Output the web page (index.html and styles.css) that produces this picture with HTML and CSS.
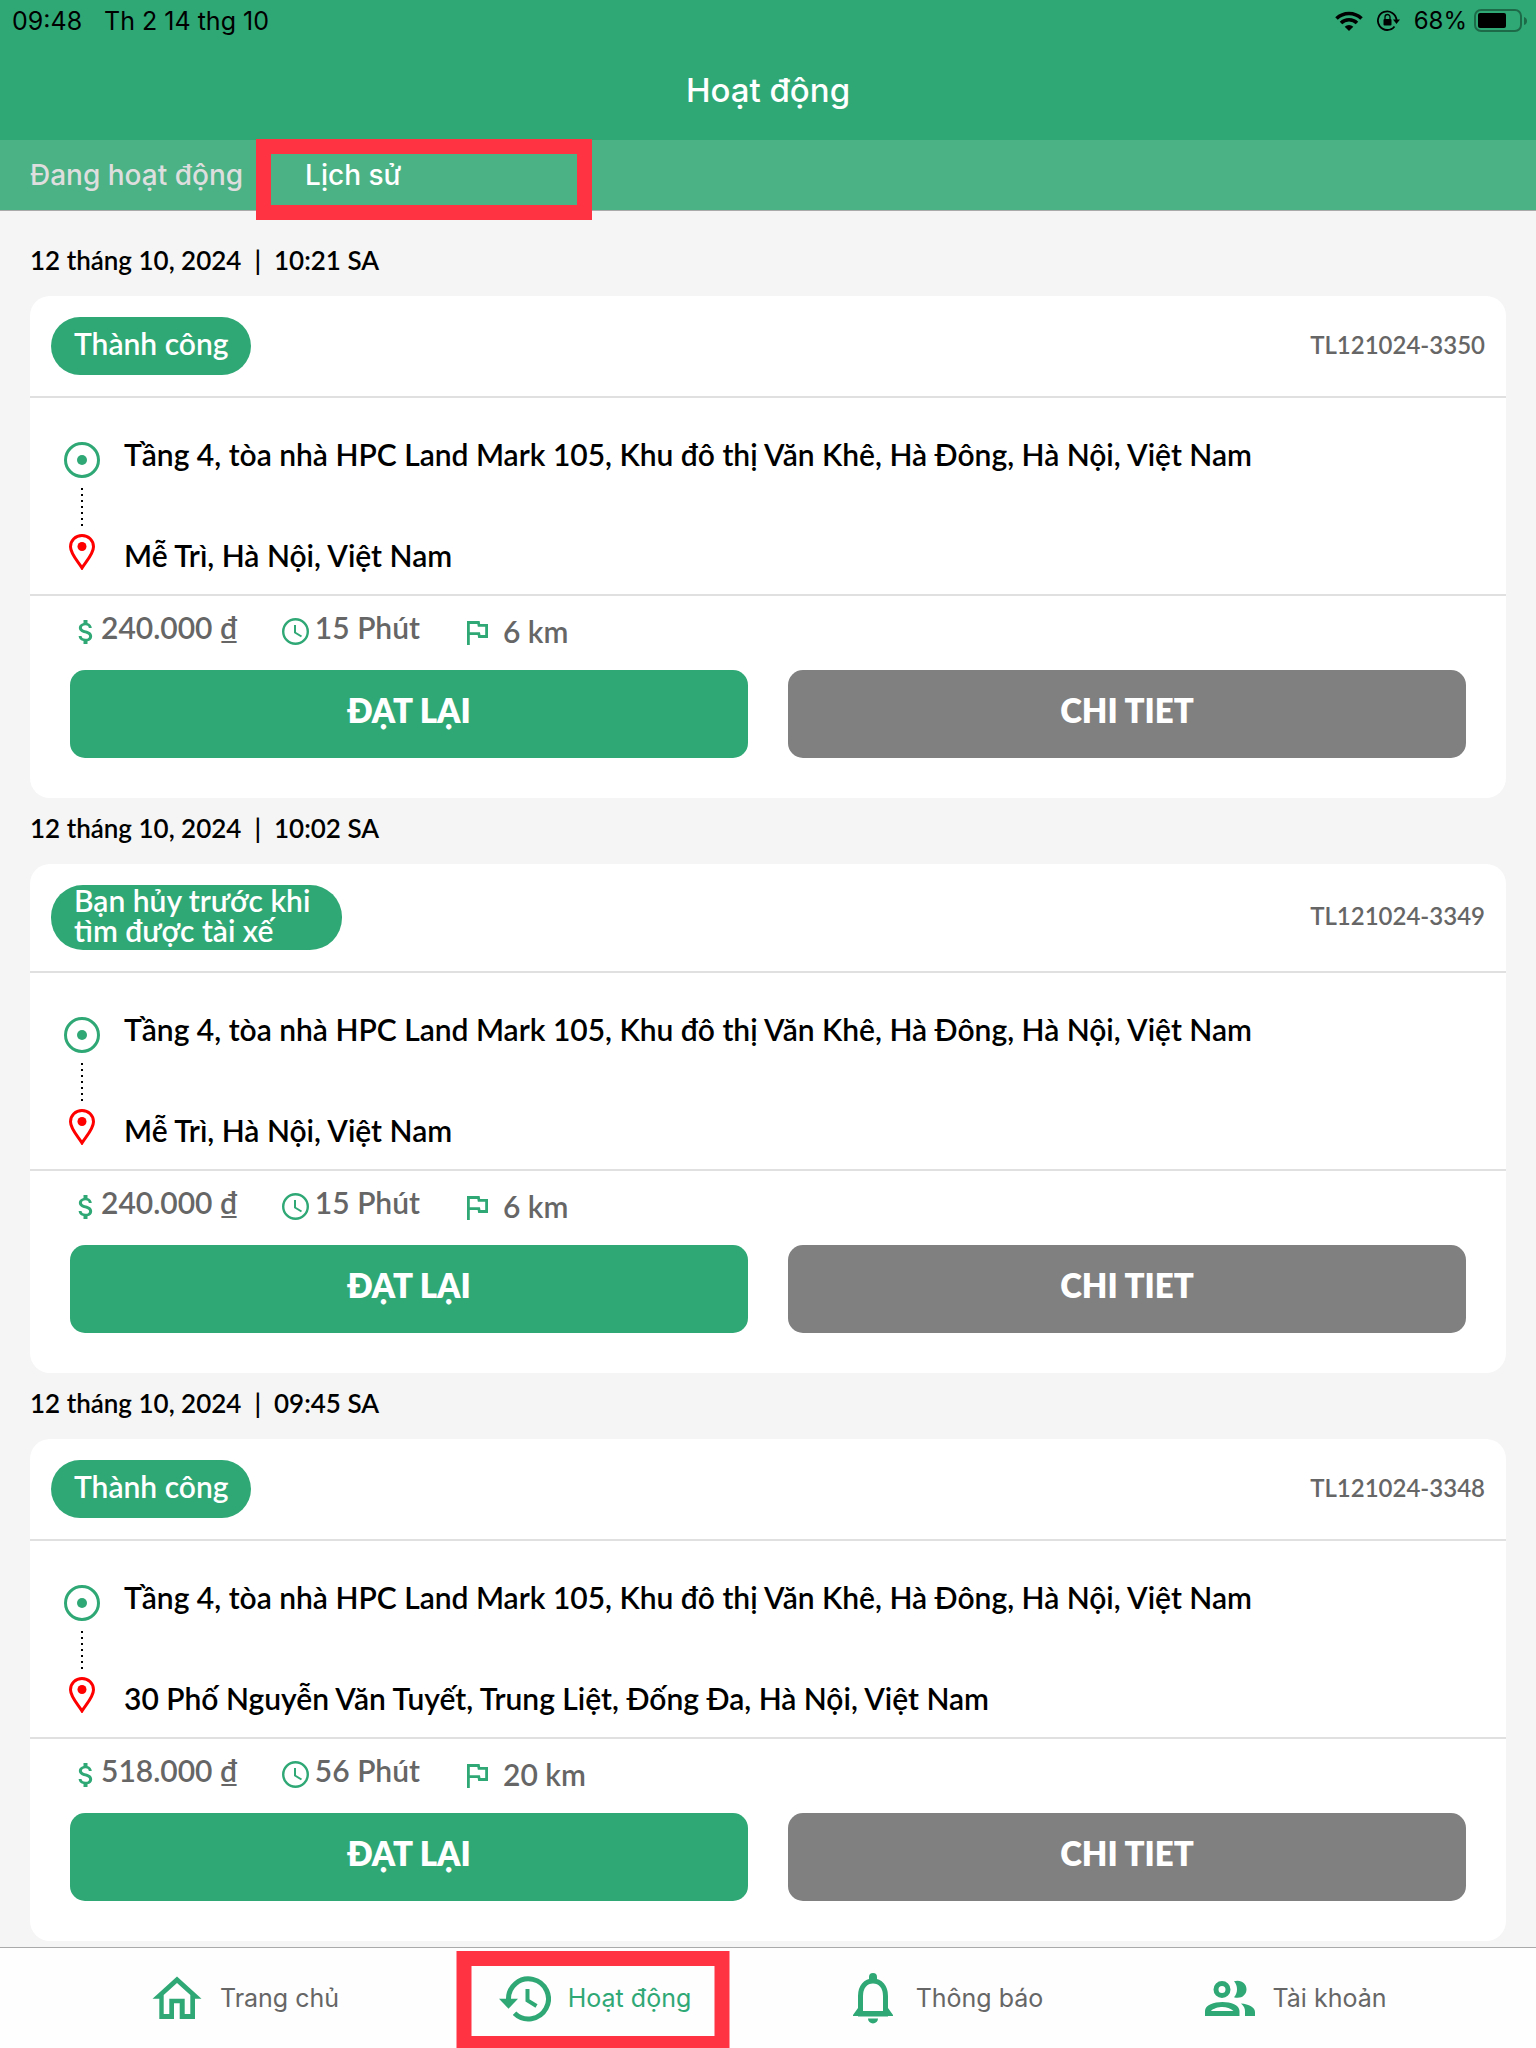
FILE: index.html
```
<!DOCTYPE html>
<html lang="vi">
<head>
    <meta charset="UTF-8">
    <meta name="viewport" content="width=device-width, initial-scale=1.0">
    <title>Hoạt động</title>
    <link rel="stylesheet" href="styles.css">
</head>
<body>
    <!-- Shared icons -->
    <svg class="sprite" aria-hidden="true">
        <symbol id="icon-start" viewBox="0 0 36 36">
            <circle cx="18" cy="18" r="16.5" fill="none" stroke="currentColor" stroke-width="3"/>
            <circle cx="18" cy="18" r="5" fill="currentColor"/>
        </symbol>
        <symbol id="icon-pin" viewBox="0 0 26 36">
            <path d="M13 1.5C6.500 1.500 1.500 6.300 1.500 12.800 1.500 20 9 27.500 13 34 17 27.500 24.500 20 24.500 12.800 24.500 6.300 19.500 1.500 13 1.500z" fill="none" stroke="currentColor" stroke-width="3"/>
            <circle cx="13" cy="12.500" r="4.500" fill="currentColor"/>
        </symbol>
        <symbol id="icon-money" viewBox="6 3 11 18">
            <path fill="currentColor" d="M11.800 10.900c-2.270-.59-3-1.200-3-2.150 0-1.090 1.010-1.850 2.700-1.850 1.780 0 2.440.85 2.500 2.100h2.210c-.07-1.720-1.120-3.300-3.210-3.810V3h-3v2.160c-1.940.42-3.500 1.680-3.500 3.610 0 2.310 1.910 3.460 4.700 4.130 2.500.6 3 1.480 3 2.410 0 .69-.49 1.790-2.700 1.790-2.060 0-2.870-.92-2.980-2.100h-2.200c.12 2.190 1.760 3.420 3.680 3.830V21h3v-2.150c1.950-.37 3.500-1.500 3.500-3.550 0-2.840-2.430-3.810-4.700-4.400z"/>
        </symbol>
        <symbol id="icon-clock" viewBox="0 0 27 27">
            <circle cx="13.500" cy="13.500" r="12.300" fill="none" stroke="currentColor" stroke-width="2.400"/>
            <path d="M13 7v7.500l6.500 4" fill="none" stroke="currentColor" stroke-width="2"/>
        </symbol>
        <symbol id="icon-flag" viewBox="5 4 15 17">
            <path fill="currentColor" d="M12.360 6l.4 2H18v6h-3.360l-.4-2H7V6h5.360M14 4H5v17h2v-7h5.600l.4 2h7V6h-5.600L14 4z"/>
        </symbol>
    </svg>

    <header class="header">
        <div class="status-bar">
            <div class="status-left">
                <span>09:48</span>
                <span>Th 2 14 thg 10</span>
            </div>
            <div class="status-right">
                <svg class="wifi" viewBox="0 0 28 20" aria-hidden="true">
                    <path d="M1.500 7.500a18 18 0 0 1 25 0M6 12a11.500 11.500 0 0 1 16 0" fill="none" stroke="#000" stroke-width="3.600"/>
                    <path d="M14 20l-4.300-4.300a6 6 0 0 1 8.600 0z"/>
                </svg>
                <svg class="lock" viewBox="0 0 23 21" aria-hidden="true">
                    <path d="M17.500 16.500a9.300 9.300 0 1 1 2-6.500" fill="none" stroke="#000" stroke-width="1.800"/>
                    <path d="M16 9.500h7l-3.500 4.500z"/>
                    <rect x="6.500" y="9" width="8" height="6.500" rx="1"/>
                    <path d="M8 9.500V7a2.500 2.500 0 0 1 5 0v2.500" fill="none" stroke="#000" stroke-width="1.300"/>
                </svg>
                <span>68%</span>
                <svg class="battery" viewBox="0 0 53 23" aria-hidden="true">
                    <rect x="1" y="1" width="46" height="21" rx="6" fill="none" stroke="#1d6a48" stroke-width="2"/>
                    <rect x="4" y="4" width="28" height="15" rx="2"/>
                    <path d="M50 8q3 1 3 4t-3 4z" fill="#1d6a48"/>
                </svg>
            </div>
        </div>
        <h1>Hoạt động</h1>
    </header>

    <div class="tabs">
        <button type="button" class="tab">Đang hoạt động</button>
        <button type="button" class="tab active">Lịch sử</button>
        <div class="marker tab-marker"></div>
    </div>

    <main class="history">
        <h2 class="date">12 tháng 10, 2024 &nbsp;|&nbsp; 10:21 SA</h2>
        <article class="card">
            <div class="card-header">
                <span class="badge">Thành công</span>
                <span class="code">TL121024-3350</span>
            </div>
            <div class="route">
                <svg class="start"><use href="#icon-start"/></svg>
                <p>Tầng 4, tòa nhà HPC Land Mark 105, Khu đô thị Văn Khê, Hà Đông, Hà Nội, Việt Nam</p>
                <div class="dots"></div>
                <svg class="pin"><use href="#icon-pin"/></svg>
                <p class="destination">Mễ Trì, Hà Nội, Việt Nam</p>
            </div>
            <div class="stats">
                <div class="fare-time">
                    <span class="stat"><svg class="money"><use href="#icon-money"/></svg>240.000 ₫</span>
                    <span class="stat"><svg class="clock"><use href="#icon-clock"/></svg>15 Phút</span>
                </div>
                <span class="stat distance"><svg class="flag"><use href="#icon-flag"/></svg>6 km</span>
            </div>
            <div class="actions">
                <button type="button" class="btn">ĐẠT LẠI</button>
                <button type="button" class="btn btn-detail">CHI TIET</button>
            </div>
        </article>

        <h2 class="date">12 tháng 10, 2024 &nbsp;|&nbsp; 10:02 SA</h2>
        <article class="card">
            <div class="card-header">
                <span class="badge badge-long">Bạn hủy trước khi tìm được tài xế</span>
                <span class="code">TL121024-3349</span>
            </div>
            <div class="route">
                <svg class="start"><use href="#icon-start"/></svg>
                <p>Tầng 4, tòa nhà HPC Land Mark 105, Khu đô thị Văn Khê, Hà Đông, Hà Nội, Việt Nam</p>
                <div class="dots"></div>
                <svg class="pin"><use href="#icon-pin"/></svg>
                <p class="destination">Mễ Trì, Hà Nội, Việt Nam</p>
            </div>
            <div class="stats">
                <div class="fare-time">
                    <span class="stat"><svg class="money"><use href="#icon-money"/></svg>240.000 ₫</span>
                    <span class="stat"><svg class="clock"><use href="#icon-clock"/></svg>15 Phút</span>
                </div>
                <span class="stat distance"><svg class="flag"><use href="#icon-flag"/></svg>6 km</span>
            </div>
            <div class="actions">
                <button type="button" class="btn">ĐẠT LẠI</button>
                <button type="button" class="btn btn-detail">CHI TIET</button>
            </div>
        </article>

        <h2 class="date">12 tháng 10, 2024 &nbsp;|&nbsp; 09:45 SA</h2>
        <article class="card">
            <div class="card-header">
                <span class="badge">Thành công</span>
                <span class="code">TL121024-3348</span>
            </div>
            <div class="route">
                <svg class="start"><use href="#icon-start"/></svg>
                <p>Tầng 4, tòa nhà HPC Land Mark 105, Khu đô thị Văn Khê, Hà Đông, Hà Nội, Việt Nam</p>
                <div class="dots"></div>
                <svg class="pin"><use href="#icon-pin"/></svg>
                <p class="destination">30 Phố Nguyễn Văn Tuyết, Trung Liệt, Đống Đa, Hà Nội, Việt Nam</p>
            </div>
            <div class="stats">
                <div class="fare-time">
                    <span class="stat"><svg class="money"><use href="#icon-money"/></svg>518.000 ₫</span>
                    <span class="stat"><svg class="clock"><use href="#icon-clock"/></svg>56 Phút</span>
                </div>
                <span class="stat distance"><svg class="flag"><use href="#icon-flag"/></svg>20 km</span>
            </div>
            <div class="actions">
                <button type="button" class="btn">ĐẠT LẠI</button>
                <button type="button" class="btn btn-detail">CHI TIET</button>
            </div>
        </article>
    </main>

    <nav class="bottom-nav">
        <a href="#">
            <svg viewBox="0 0 52 52" aria-hidden="true">
                <path fill="currentColor" fill-rule="evenodd" d="M26 4.500L50.500 26.700H44V47H28.700V31.300H23V47H8.300V26.700H1.500zM26 11L12.700 23V42h5.600V26.700h15.400V42h5.600V23z"/>
            </svg>
            Trang chủ
        </a>
        <a href="#" class="active">
            <svg viewBox="0 0 52 52" aria-hidden="true">
                <path fill="none" stroke="currentColor" stroke-width="5" d="M9.500 28a20 20 0 1 1 6 13.200"/>
                <path fill="none" stroke="currentColor" stroke-width="4" d="M28.500 17v11.500l9 5.500"/>
                <path fill="currentColor" d="M0 26.700h19l-9.500 10z"/>
            </svg>
            Hoạt động
            <span class="marker nav-marker"></span>
        </a>
        <a href="#">
            <svg viewBox="0 0 52 52" aria-hidden="true">
                <path fill="none" stroke="currentColor" stroke-width="5" d="M13.500 42V24c0-9 5-15 12.500-15s12.500 6 12.500 15v18z"/>
                <path fill="currentColor" d="M6 43l5-7v3h30v-3l5 7v1H6zM22 8V5a4 4 0 0 1 8 0v3zM21 46.500h10a5 5 0 0 1-10 0z"/>
            </svg>
            Thông báo
        </a>
        <a href="#">
            <svg viewBox="0 0 52 52" aria-hidden="true">
                <circle cx="18" cy="17.500" r="6" fill="none" stroke="currentColor" stroke-width="5"/>
                <path fill="currentColor" fill-rule="evenodd" d="M1 44v-5c0-6 9-9 17.500-9s17 3 17 9v5zM7 39h22.500c-3-2.500-7-4-11-4S9 36.500 7 39z"/>
                <path fill="currentColor" d="M30 9.300c7-2 12.500 2 12.500 8s-5.500 10-12.500 8c4-4.500 4-11.500 0-16zM37 31.500c8 .5 14 4 14 8.500v4H41v-4.500c0-3-1-5.500-4-8z"/>
            </svg>
            Tài khoản
        </a>
    </nav>
</body>
</html>
```
FILE: styles.css
```
* {
    box-sizing: border-box;
}

body {
    margin: 0;
    min-height: 100vh;
    display: flex;
    flex-direction: column;
    background-color: #f5f5f5;
    color: #000;
    font-family: Lato, "Noto Sans", sans-serif;
}

h1, h2, p {
    margin: 0;
}

button {
    border: none;
    cursor: pointer;
    font-family: inherit;
}

.sprite {
    display: none;
}

.header {
    background-color: #2fa876;
    height: 140px;
    font-family: Inter, sans-serif;
}

.status-bar {
    display: flex;
    justify-content: space-between;
    height: 41px;
    padding: 0 9px 0 12px;
    font-size: 24px;
    line-height: 42px;
}

.status-left {
    display: flex;
    gap: 22px;
}

.status-right {
    display: flex;
    align-items: center;
}

.wifi {
    width: 28px;
    height: 20px;
    margin-right: 14px;
}

.lock {
    width: 23px;
    height: 21px;
    margin-right: 14px;
}

.battery {
    width: 53px;
    height: 23px;
    margin-left: 7px;
}

.status-left {
    font-size: 25px;
}

.header h1 {
    color: #fff;
    font-size: 33px;
    font-weight: 500;
    line-height: 98px;
    text-align: center;
}

.tabs {
    position: relative;
    display: flex;
    gap: 62px;
    height: 71px;
    padding: 0 30px;
    background-color: #4bb286;
    border-bottom: 1px solid #aaa;
}

.tab {
    padding: 0;
    background: none;
    color: #dedede;
    font-family: Inter, sans-serif;
    font-size: 28px;
    font-weight: 500;
}

.tab.active {
    color: #fff;
}

/* Red frames that point out the current section */
.marker {
    position: absolute;
    border: 15px solid #ff3342;
    pointer-events: none;
}

.tab-marker {
    left: 256px;
    top: -1px;
    width: 336px;
    height: 81px;
}

.history {
    flex: 1;
    padding: 19px 30px 6px;
}

.date {
    height: 66px;
    font-size: 26px;
    font-weight: 600;
    line-height: 61px;
}

.card {
    background-color: #fff;
    border-radius: 20px;
}

.card-header {
    display: flex;
    align-items: center;
    justify-content: space-between;
    padding: 21px;
    border-bottom: 2px solid #e0e0e0;
}

.badge {
    height: 58px;
    padding: 0 23px;
    border-radius: 32px;
    background-color: #2fa876;
    color: #fff;
    font-size: 30px;
    font-weight: 600;
    line-height: 53px;
}

.badge-long {
    width: 291px;
    height: 65px;
    line-height: 30px;
}

.code {
    padding-bottom: 4px;
    color: #666;
    font-size: 24px;
    font-weight: 600;
}

.route {
    display: grid;
    grid-template-columns: 36px 1fr;
    grid-template-rows: 36px 56px 36px;
    column-gap: 24px;
    justify-items: center;
    padding: 44px 34px 24px;
    border-bottom: 2px solid #e0e0e0;
    font-size: 30px;
    font-weight: 600;
}

.route p {
    justify-self: start;
    line-height: 24px;
}

.route .destination {
    line-height: 42px;
}

.start {
    width: 36px;
    height: 36px;
    color: #2fa876;
}

.dots {
    grid-column: 1;
    width: 2px;
    height: 40px;
    margin-top: 10px;
    background: repeating-linear-gradient(#000 0 2px, transparent 2px 6px);
}

.pin {
    grid-column: 1;
    width: 26px;
    height: 36px;
    color: #f00;
}

.stats {
    display: flex;
    gap: 47px;
    height: 74px;
    padding: 0 48px;
    color: #666;
    font-size: 30px;
    font-weight: 600;
    line-height: 63px;
}

.stats svg {
    color: #2fa876;
}

.fare-time {
    display: flex;
    justify-content: space-between;
    width: 342px;
}

.stat {
    display: flex;
    gap: 8px;
}

.fare-time .stat:last-child {
    gap: 6px;
}

.distance {
    gap: 15px;
    line-height: 70px;
}

.money {
    width: 15px;
    height: 24px;
    margin-top: 24px;
}

.clock {
    width: 27px;
    height: 27px;
    margin-top: 22px;
}

.flag {
    width: 21px;
    height: 24px;
    margin-top: 25px;
}

.actions {
    display: grid;
    grid-template-columns: 1fr 1fr;
    gap: 40px;
    padding: 0 40px 40px;
}

.btn {
    height: 88px;
    padding: 0 0 8px;
    border-radius: 15px;
    background-color: #2fa876;
    color: #fff;
    font-size: 33px;
    font-weight: 800;
}

.btn-detail {
    background-color: #808080;
}

.bottom-nav {
    display: grid;
    grid-template-columns: repeat(4, 1fr);
    height: 101px;
    padding: 0 68px;
    overflow: hidden;
    background-color: #fefefe;
    border-top: 1px solid #aaa;
    font-family: Inter, sans-serif;
    font-size: 25px;
}

.bottom-nav a {
    position: relative;
    display: flex;
    align-items: center;
    justify-content: center;
    gap: 17px;
    padding-left: 4px;
    color: #666;
    text-decoration: none;
}

.bottom-nav a.active {
    color: #2fa876;
}

.bottom-nav svg {
    width: 52px;
    height: 52px;
    color: #2fa876;
}

.nav-marker {
    top: 3px;
    left: 50%;
    width: 273px;
    height: 100px;
    transform: translateX(-50%);
}
```
